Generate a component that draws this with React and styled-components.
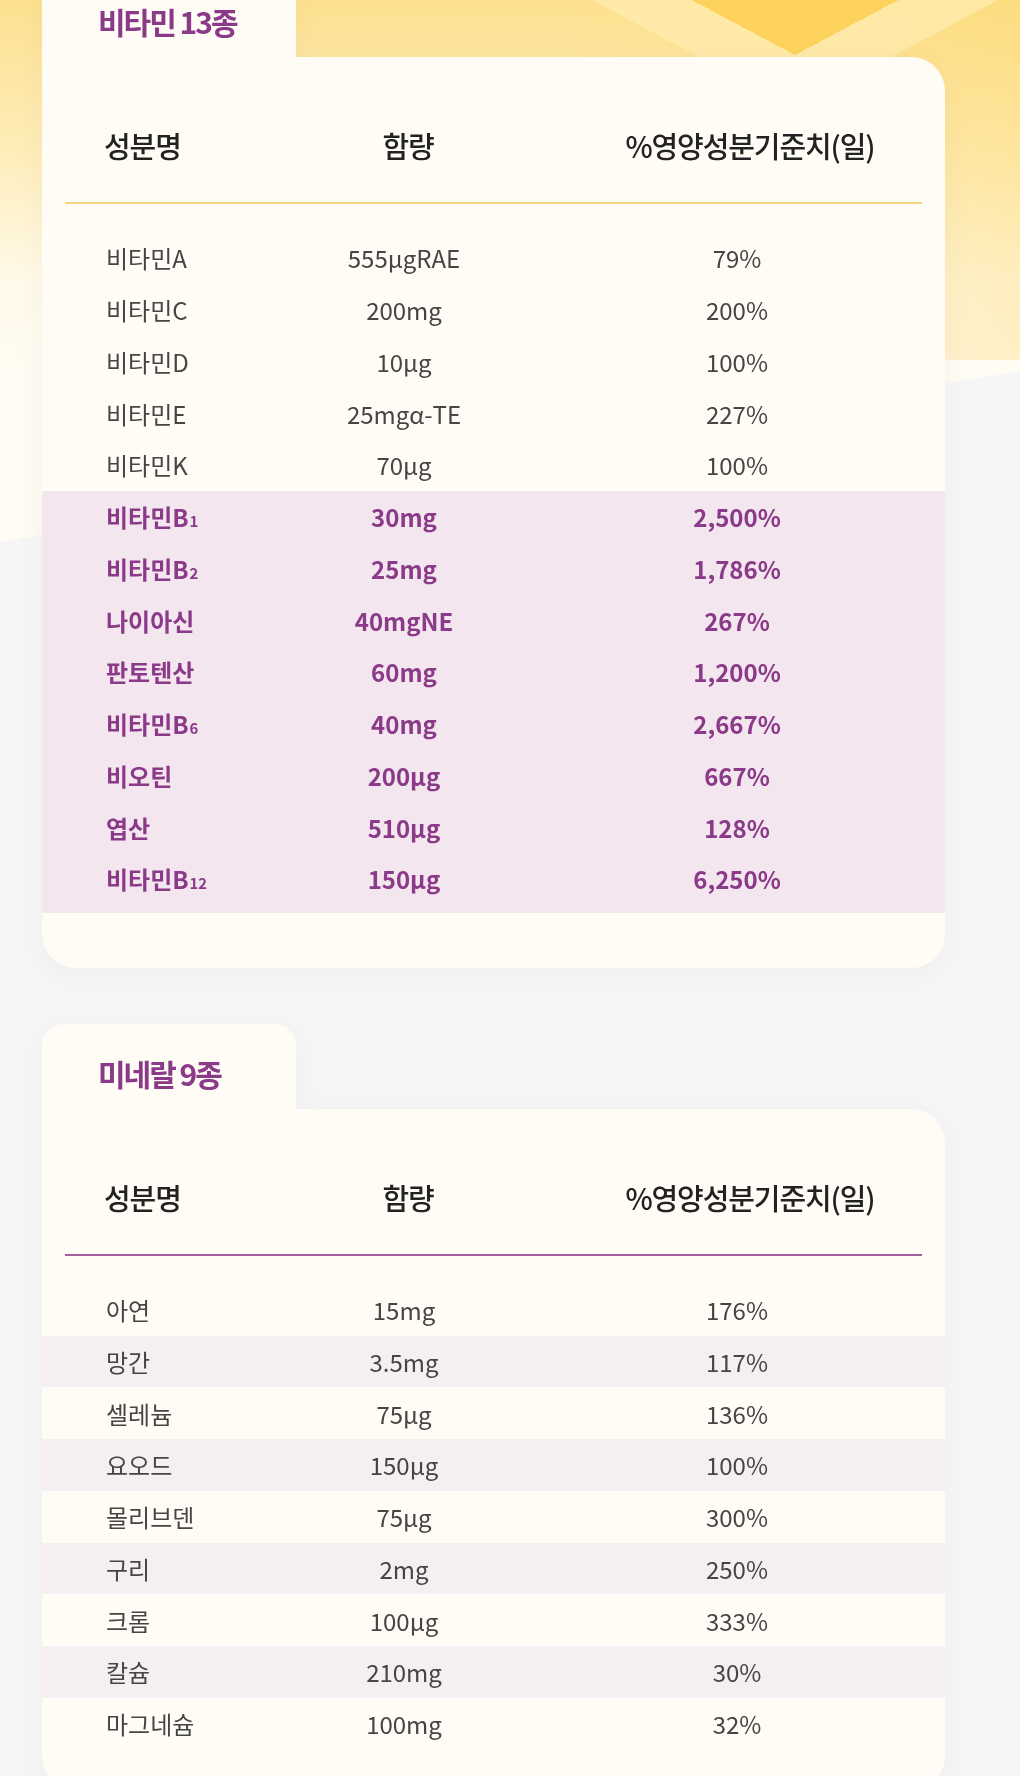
import React from "react";
import styled, { createGlobalStyle } from "styled-components";

const GlobalStyle = createGlobalStyle`
  html, body { margin: 0; padding: 0; }
  body {
    background: #f6f6f6;
    font-family: "Noto Sans CJK KR", "Noto Sans", sans-serif;
    -webkit-font-smoothing: antialiased;
  }
  * { box-sizing: border-box; }
`;

const Page = styled.div`
  min-height: 100vh;
  display: flex;
  flex-direction: column;
  gap: 56px;
  padding: 0 0 0 42px;
  overflow: hidden;
  background:
    conic-gradient(from -62deg at 795px 55px, #fdd35e 0deg 124deg, transparent 124deg 360deg),
    conic-gradient(from -62deg at 795px 108px, rgba(255, 236, 175, 0.75) 0deg 124deg, transparent 124deg 360deg),
    linear-gradient(90deg, rgba(253, 210, 90, 0) 55%, rgba(253, 210, 90, 0.3) 100%) no-repeat 0 0 / 100% 360px,
    linear-gradient(180deg, rgba(253, 218, 120, 0.8) 0px, rgba(254, 226, 140, 0.55) 150px, rgba(255, 243, 205, 0.25) 280px, rgba(255, 250, 235, 0) 370px) no-repeat 0 0 / 100% 370px,
    linear-gradient(170.5deg, #fffbf0 0%, #fffcf4 70.3%, transparent 70.3%) no-repeat 0 0 / 100% 600px,
    #f6f6f6;
`;

const Section = styled.section`
  display: flex;
  flex-direction: column;
  width: 903px;
  filter: drop-shadow(0 6px 14px rgba(0, 0, 0, 0.035));
  &:first-child {
    margin-top: -28px;
  }
`;

const Tab = styled.div`
  width: 254px;
  height: 85px;
  background: #fffcf5;
  border-radius: 22px 22px 0 0;
  display: flex;
  align-items: center;
  padding: 13px 0 0 56px;
`;

const Title = styled.h2`
  margin: 0;
  font-size: 30px;
  line-height: 36px;
  font-weight: 700;
  letter-spacing: -2px;
  color: #8a3a88;
`;

const Card = styled.div`
  background: #fffcf5;
  border-radius: 0 34px 34px 34px;
  padding-bottom: ${(p) => p.$pb}px;
`;

const HeaderRow = styled.div`
  display: grid;
  grid-template-columns: 150px 308px 376px;
  padding: 70px 0 39px 62px;
  font-size: 29px;
  line-height: 36px;
  font-weight: 500;
  letter-spacing: -1.1px;
  color: #222;
  & > span:not(:first-child) {
    text-align: center;
  }
`;

const Divider = styled.div`
  height: 2px;
  margin: 0 23px;
  background: ${(p) => p.$color};
`;

const Rows = styled.div`
  margin-top: 28px;
  display: flex;
  flex-direction: column;
`;

const Band = styled.div`
  background: #f3e6ee;
  padding: 0 0 8px;
`;

const Row = styled.div`
  display: grid;
  grid-template-columns: 150px 296px 370px;
  align-items: center;
  height: 51.75px;
  padding-left: 64px;
  font-size: 24px;
  font-weight: ${(p) => (p.$accent ? 700 : 400)};
  color: ${(p) => (p.$accent ? "#8b3a89" : "#454545")};
  background: ${(p) => (p.$stripe ? "#f6eff2" : "transparent")};
  & > span:not(:first-child) {
    text-align: center;
  }
`;

const Sub = styled.small`
  font-size: 0.62em;
  vertical-align: baseline;
  margin-left: 1px;
`;

const vitaminsPlain = [
  ["비타민A", "555µgRAE", "79%"],
  ["비타민C", "200mg", "200%"],
  ["비타민D", "10µg", "100%"],
  ["비타민E", "25mgα-TE", "227%"],
  ["비타민K", "70µg", "100%"],
];

const vitaminsB = [
  ["비타민B", "30mg", "2,500%", "1"],
  ["비타민B", "25mg", "1,786%", "2"],
  ["나이아신", "40mgNE", "267%"],
  ["판토텐산", "60mg", "1,200%"],
  ["비타민B", "40mg", "2,667%", "6"],
  ["비오틴", "200µg", "667%"],
  ["엽산", "510µg", "128%"],
  ["비타민B", "150µg", "6,250%", "12"],
];

const minerals = [
  ["아연", "15mg", "176%"],
  ["망간", "3.5mg", "117%"],
  ["셀레늄", "75µg", "136%"],
  ["요오드", "150µg", "100%"],
  ["몰리브덴", "75µg", "300%"],
  ["구리", "2mg", "250%"],
  ["크롬", "100µg", "333%"],
  ["칼슘", "210mg", "30%"],
  ["마그네슘", "100mg", "32%"],
];

function Header({ line }) {
  return (
    <>
      <HeaderRow>
        <span>성분명</span>
        <span>함량</span>
        <span>%영양성분기준치(일)</span>
      </HeaderRow>
      <Divider $color={line} />
    </>
  );
}

function DataRow({ item, accent, stripe }) {
  const [name, amount, pct, sub] = item;
  return (
    <Row $accent={accent} $stripe={stripe}>
      <span>
        {name}
        {sub && <Sub>{sub}</Sub>}
      </span>
      <span>{amount}</span>
      <span>{pct}</span>
    </Row>
  );
}

export default function App() {
  return (
    <>
      <GlobalStyle />
      <Page>
        <Section>
          <Tab>
            <Title>비타민 13종</Title>
          </Tab>
          <Card $pb={55}>
            <Header line="#f4d47c" />
            <Rows>
              {vitaminsPlain.map((it) => (
                <DataRow key={it[0]} item={it} />
              ))}
              <Band>
                {vitaminsB.map((it, i) => (
                  <DataRow key={i} item={it} accent />
                ))}
              </Band>
            </Rows>
          </Card>
        </Section>
        <Section>
          <Tab>
            <Title>미네랄 9종</Title>
          </Tab>
          <Card $pb={40}>
            <Header line="#a25d9e" />
            <Rows>
              {minerals.map((it, i) => (
                <DataRow key={it[0]} item={it} stripe={i % 2 === 1} />
              ))}
            </Rows>
          </Card>
        </Section>
      </Page>
    </>
  );
}
